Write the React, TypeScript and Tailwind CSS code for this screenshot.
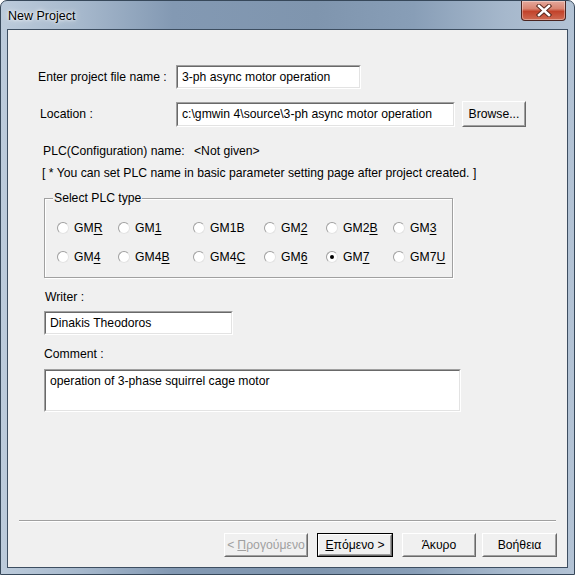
import React from "react";

type Plc = { pre: string; u: string; post?: string; checked?: boolean };

const row1: Plc[] = [
  { pre: "GM", u: "R" },
  { pre: "GM", u: "1" },
  { pre: "GM1B", u: "" },
  { pre: "GM", u: "2" },
  { pre: "GM2", u: "B" },
  { pre: "GM", u: "3" },
];

const row2: Plc[] = [
  { pre: "GM", u: "4" },
  { pre: "GM4", u: "B" },
  { pre: "GM4", u: "C" },
  { pre: "GM", u: "6" },
  { pre: "GM", u: "7", checked: true },
  { pre: "GM7", u: "U" },
];

const colW = ["w-[61px]", "w-[75px]", "w-[71px]", "w-[62px]", "w-[67px]", "w-[50px]"];

function Sunken({ className, children }: { className: string; children?: React.ReactNode }) {
  return (
    <div
      className={
        "border border-t-[#a0a0a0] border-l-[#a0a0a0] border-r-white border-b-white " +
        className
      }
    >
      <div className="h-full border border-t-[#696969] border-l-[#696969] border-r-[#e3e3e3] border-b-[#e3e3e3] bg-white pl-[4px] text-black">
        {children}
      </div>
    </div>
  );
}

function Button({
  className,
  children,
  disabled,
  isDefault,
}: {
  className: string;
  children: React.ReactNode;
  disabled?: boolean;
  isDefault?: boolean;
}) {
  const inner = (
    <div className="h-full border border-t-white border-l-white border-r-[#696969] border-b-[#696969]">
      <div
        className={
          "h-full flex items-center justify-center border border-t-[#f0f0f0] border-l-[#f0f0f0] border-r-[#a0a0a0] border-b-[#a0a0a0] bg-[#f0f0f0] " +
          (disabled ? "text-[#a0a0a0]" : "text-black")
        }
      >
        {children}
      </div>
    </div>
  );
  if (isDefault) {
    return <div className={"border border-black " + className}>{inner}</div>;
  }
  return <div className={className}>{inner}</div>;
}

function Radio({ item, w }: { item: Plc; w: string }) {
  return (
    <div className={"flex items-center h-[16px] shrink-0 " + w}>
      <span className="relative w-[12px] h-[12px] rounded-full border border-t-[#a0a0a0] border-l-[#a0a0a0] border-r-[#e3e3e3] border-b-[#e3e3e3] bg-white shrink-0 flex items-center justify-center">
        {item.checked && <span className="w-[4px] h-[4px] rounded-full bg-black" />}
      </span>
      <span className="ml-[5px]">
        {item.pre}
        {item.u && <span className="underline underline-offset-[2px]">{item.u}</span>}
      </span>
    </div>
  );
}

export default function App() {
  return (
    <div className="w-[575px] h-[575px] flex flex-col rounded-t-[7px] border border-[#37485a] bg-[linear-gradient(90deg,#bccbdb_0%,#a6b8cc_14%,#8399b3_30%,#7f95ae_55%,#889eb7_72%,#a6b8cc_88%,#b3c3d5_100%)] font-['Liberation_Sans',Arial,sans-serif] text-[12.2px] leading-[14px] text-black overflow-hidden">
      {/* TITLE */}
      <div className="h-[28px] flex shrink-0">
        <div className="pl-[7px] pt-[8px] text-[12.5px] [text-shadow:0_0_6px_#fff,0_0_3px_#fff]">
          New Project
        </div>
        <div className="flex-1" />
        <div className="mr-[8px] w-[45px] h-[20px] rounded-b-[4px] border border-t-0 border-[#4a2420] bg-[linear-gradient(180deg,#e4a89c_0%,#d98572_40%,#c2432b_55%,#cf6a52_100%)] flex items-center justify-center shadow-[inset_0_0_0_1px_rgba(255,255,255,0.35)]">
          <svg width="16" height="13" viewBox="0 0 16 13">
            <path d="M3 2 L13 11 M13 2 L3 11" stroke="#5a2a20" strokeWidth="4.5" strokeLinecap="square" />
            <path d="M3 2 L13 11 M13 2 L3 11" stroke="#fff" strokeWidth="2.5" strokeLinecap="square" />
          </svg>
        </div>
      </div>

      {/* CLIENT */}
      <div className="flex-1 mx-[6px] mb-[6px] border border-[#3d4e61] bg-[#f0f0f0] flex flex-col">
        <div className="mt-[35px] flex items-center pl-[30px]">
          <span className="w-[138px]">Enter project file name :</span>
          <Sunken className="w-[185px] h-[24px]">
            <div className="pt-[3px]">3-ph async motor operation</div>
          </Sunken>
        </div>

        <div className="mt-[12px] flex items-center pl-[32px]">
          <span className="w-[136px]">Location :</span>
          <Sunken className="w-[279px] h-[25px]">
            <div className="pt-[3px]">c:\gmwin 4\source\3-ph async motor operation</div>
          </Sunken>
          <Button className="ml-[7px] w-[64px] h-[26px]">Browse...</Button>
        </div>

        <div className="mt-[17px] pl-[35px] flex">
          <span className="w-[151px]">PLC(Configuration) name:</span>
          <span>&lt;Not given&gt;</span>
        </div>

        <div className="mt-[8px] pl-[34px]">
          [ * You can set PLC name in basic parameter setting page after project created. ]
        </div>

        {/* GROUP */}
        <div className="relative mt-[18px] ml-[36px] w-[409px] h-[80px] border border-[#a0a0a0] shadow-[inset_1px_1px_0_#fff,1px_1px_0_#fff]">
          <span className="absolute left-[8px] top-[-8px] px-[1px] bg-[#f0f0f0]">Select PLC type</span>
          <div className="mt-[21px] pl-[12px] flex">
            {row1.map((p, i) => (
              <Radio key={i} item={p} w={colW[i]} />
            ))}
          </div>
          <div className="mt-[13px] pl-[12px] flex">
            {row2.map((p, i) => (
              <Radio key={i} item={p} w={colW[i]} />
            ))}
          </div>
        </div>

        <div className="mt-[12px] pl-[37px]">Writer :</div>
        <Sunken className="mt-[7px] ml-[36px] w-[189px] h-[24px]">
          <div className="pt-[3px]">Dinakis Theodoros</div>
        </Sunken>

        <div className="mt-[12px] pl-[36px]">Comment :</div>
        <Sunken className="mt-[8px] ml-[36px] w-[417px] h-[43px]">
          <div className="pt-[3px]">operation of 3-phase squirrel cage motor</div>
        </Sunken>

        {/* SEPARATOR */}
        <div className="mt-[108px] ml-[11px] w-[537px] h-[2px] border-t border-t-[#a0a0a0] border-b border-b-white" />

        {/* BUTTONS */}
        <div className="mt-[11px] flex">
          <Button disabled className="ml-[216px] w-[84px] h-[24px]">
            &lt; <span className="underline ml-[3px]">Π</span>ρογούμενο
          </Button>
          <Button isDefault className="ml-[9px] w-[76px] h-[24px]">
            <span className="underline">Ε</span>πόμενο &gt;
          </Button>
          <Button className="ml-[9px] w-[74px] h-[24px]">Άκυρο</Button>
          <Button className="ml-[6px] w-[75px] h-[24px]">Βοήθεια</Button>
        </div>
      </div>
    </div>
  );
}
